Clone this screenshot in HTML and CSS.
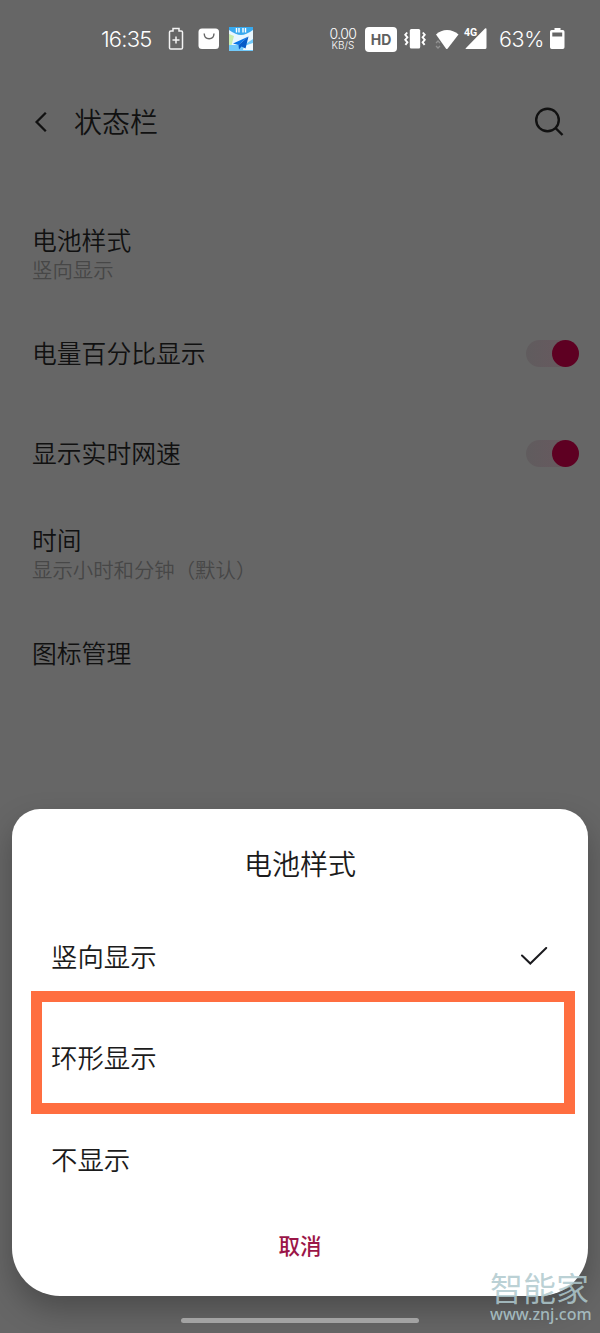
FILE: index.html
```html
<!DOCTYPE html>
<html lang="zh-CN">
<head>
<meta charset="utf-8">
<title>状态栏</title>
<link rel="stylesheet" href="styles.css">
</head>
<body>
<div class="screen">
  <header class="status">
    <span class="clock">16:35</span>
    <svg class="charge" width="16" height="24" viewBox="0 0 16 24" fill="none" stroke="#f4f4f4" stroke-width="1.5"><path d="M5 4V1.500h6V4h2.200q1.300 0 1.300 1.300v15.400q0 1.300-1.300 1.300H2.800q-1.300 0-1.300-1.300V5.300q0-1.300 1.300-1.300zM8 9.500v7M4.500 13h7"/></svg>
    <svg class="shop" width="22" height="22" viewBox="0 0 22 22"><rect x=".5" y=".5" width="20.500" height="20.500" rx="3.500" fill="#fff"/><path d="M6.200 5.500C6.500 12.500 15.700 12.500 16 5.500" fill="none" stroke="#666" stroke-width="1.400"/></svg>
    <svg class="plane" width="24" height="24" viewBox="0 0 24 24"><path fill="#e8f7ff" d="M0 0h24v24H0z"/><path fill="#c9eeb0" d="M0 7l5 2-3 11H0z"/><path fill="#71c9fa" d="M0 18h15l9-6v12H0z"/><path fill="#38a9ee" d="M0 0h24v3Q17 8 12 8T0 3z"/><path d="M7.500 1v4.500M10 1v4.500M14 1v4.500M16.500 1v4.500" stroke="#fff" stroke-width="1.400"/><path fill="#f4fbff" d="M15 19l9-3v7H14z"/><path fill="#0874e8" d="M19.500 9.500L4 16.500l5.500 1.500z"/><path fill="#075bc8" d="M19.500 9.500L9.500 18l.5 4.500 2.500-3 4 2z"/></svg>
    <span class="speed"><span class="rate">0.00</span><span class="unit">KB/S</span></span>
    <span class="hd">HD</span>
    <svg class="vibrate" width="22" height="20" viewBox="0 0 22 20"><rect x="5.800" y="0" width="10.400" height="19.500" rx="1.500" fill="#fff"/><path d="M3.200 3.500L1.200 5.800l2.200 2.500-2.200 2.500 2.200 2.500-2 2.500M18.800 3.500l2 2.300-2.200 2.500 2.200 2.500-2.200 2.500 2 2.500" fill="none" stroke="#fff" stroke-width="1.900"/></svg>
    <svg class="wifi" width="24" height="21" viewBox="0 0 24 21"><path d="M1 5.500C7-.5 17-.5 23.500 5.500L12.500 19.700q-.7.700-1.400 0z" fill="#fff"/><path d="M1 14l2-2 2 2M1 17l2 2 2-2" fill="none" stroke="#929292" stroke-width="1.300"/></svg>
    <span class="cell">
      <svg width="22" height="22" viewBox="0 0 22 22"><path d="M20 .5q1.500-1 1.500.8v18.200q0 1.500-1.500 1.500H1.500q-1.500 0-.5-1z" fill="#fff"/></svg>
      <span class="net">4G</span>
    </span>
    <span class="percent">63%</span>
    <svg class="battery" width="15" height="22" viewBox="0 0 15 22"><path fill="#fff" fill-rule="evenodd" d="M4.500 0h6v2h2.300Q14.500 2 14.500 3.700v15.600q0 1.700-1.700 1.700H1.700Q0 21 0 19.300V3.700Q0 2 1.700 2h2.800zM2.300 4.500v4h9.900v-4z"/></svg>
  </header>

  <div class="toolbar">
    <svg width="16" height="24" viewBox="0 0 16 24" fill="none" stroke="#111" stroke-width="2.300"><path d="M13.800 2.800L4.600 12l9.200 9.200"/></svg>
    <h1 class="heading">状态栏</h1>
    <svg width="32" height="32" viewBox="0 0 32 32" fill="none" stroke="#111" stroke-width="2.400"><circle cx="13.500" cy="14" r="11.300"/><path d="M21.500 22L28.500 29"/></svg>
  </div>

  <main class="settings">
    <div class="row"><div class="label"><div class="name">电池样式</div><div class="note">竖向显示</div></div></div>
    <div class="row"><div class="name">电量百分比显示</div><span class="toggle"><span class="knob"></span></span></div>
    <div class="row"><div class="name">显示实时网速</div><span class="toggle"><span class="knob"></span></span></div>
    <div class="row"><div class="label"><div class="name">时间</div><div class="note">显示小时和分钟（默认）</div></div></div>
    <div class="row"><div class="name">图标管理</div></div>
  </main>

  <section class="dialog">
    <h2 class="dialog-title">电池样式</h2>
    <div class="option"><span class="choice">竖向显示</span><svg width="28" height="20" viewBox="0 0 28 20" fill="none" stroke="#1b1b1f" stroke-width="2" stroke-linecap="round"><path d="M2 8.500l8.300 8L26.200 1"/></svg></div>
    <div class="option chosen"><span class="choice">环形显示</span></div>
    <div class="option"><span class="choice">不显示</span></div>
    <div class="cancel">取消</div>
  </section>
  <div class="home-bar"></div>
  <div class="watermark"><span class="brand">智能家</span><span class="site">www.znj.com</span></div>
</div>
</body>
</html>
```
FILE: styles.css
```css
* { box-sizing: border-box; }
body { margin: 0; background: #666; font-family: "Noto Sans CJK SC", sans-serif; font-weight: 350; }
h1, h2 { margin: 0; font-weight: 350; }
svg { display: block; flex: none; }
.screen { position: relative; width: 600px; height: 1333px; overflow: hidden; background: #666; color: #111; }

.status { display: flex; align-items: center; height: 78px; padding-left: 101px; color: #fff; font-family: Inter, sans-serif; font-weight: 300; white-space: nowrap; }
.clock { width: 67px; font-size: 22px; letter-spacing: -.8px; }
.shop { margin-left: 14px; }
.plane { margin-left: 9px; }
.speed { display: flex; flex-direction: column; align-items: center; width: 28px; margin-left: 76px; padding-bottom: 1px; }
.rate { font-size: 14px; line-height: 12px; letter-spacing: -.6px; }
.unit { font-size: 10px; line-height: 10px; }
.hd { width: 32px; height: 25px; margin-left: 8px; border-radius: 4px; background: #fff; color: #606060; font-size: 14px; font-weight: 700; line-height: 25px; text-align: center; }
.vibrate { margin-left: 7px; }
.wifi { margin-left: 9px; }
.cell { position: relative; margin-left: 6px; }
.net { position: absolute; left: -1px; top: -1px; font: 700 10.5px/11px Roboto, sans-serif; }
.percent { width: 47px; margin-left: 12px; font-size: 21.5px; letter-spacing: -.4px; }
.battery { margin-left: 4px; }

.toolbar { display: flex; align-items: center; height: 88px; padding: 0 34px 0 32px; }
.heading { flex: 1; margin-left: 26px; padding-bottom: 2px; font-size: 28px; line-height: 40px; }
.settings { padding: 37px 21px 0 32px; }
.row { display: flex; align-items: center; justify-content: space-between; height: 100px; }
.name { padding-bottom: 2px; font-size: 24.8px; line-height: 36px; }
.label { padding-bottom: 4px; }
.label .name { padding-bottom: 0; }
.label .note { margin-top: -1px; }
.note { font-size: 20.4px; line-height: 26px; color: #474747; }
.toggle { display: flex; justify-content: flex-end; width: 53px; height: 27px; border-radius: 14px; background: linear-gradient(90deg, #605c5e, #6a585f); }
.knob { width: 27px; height: 27px; border-radius: 50%; background: #5e0022; }

.dialog { position: absolute; left: 12px; top: 809px; width: 576px; height: 487px; padding-top: 34px; border-radius: 28px 28px 48px 48px; background: #fff; color: #1b1b1b; box-shadow: 0 14px 30px rgba(0, 0, 0, .26); }
.dialog-title { height: 63px; font-size: 28px; line-height: 40px; text-align: center; }
.option { display: flex; align-items: center; justify-content: space-between; height: 101px; padding: 0 40px 0 39px; font-size: 26.4px; }
.choice { padding-bottom: 3px; }
.chosen { height: 123px; margin: -16px 13px -5px 19px; padding: 10px 0 0 9px; border: 11px solid #ff6e40; }
.cancel { margin-top: 18px; color: #9b1648; font-size: 21.5px; font-weight: 500; line-height: 34px; text-align: center; }
.home-bar { position: absolute; left: 181px; top: 1318px; width: 238px; height: 5px; border-radius: 3px; background: #a3a3a3; }
.watermark { position: absolute; left: 490px; top: 1269px; display: flex; flex-direction: column; color: rgba(175, 201, 206, .85); white-space: nowrap; }
.brand { font-size: 33px; font-weight: 400; line-height: 36px; }
.site { font: 500 16px/18px "Noto Sans", sans-serif; }
```
